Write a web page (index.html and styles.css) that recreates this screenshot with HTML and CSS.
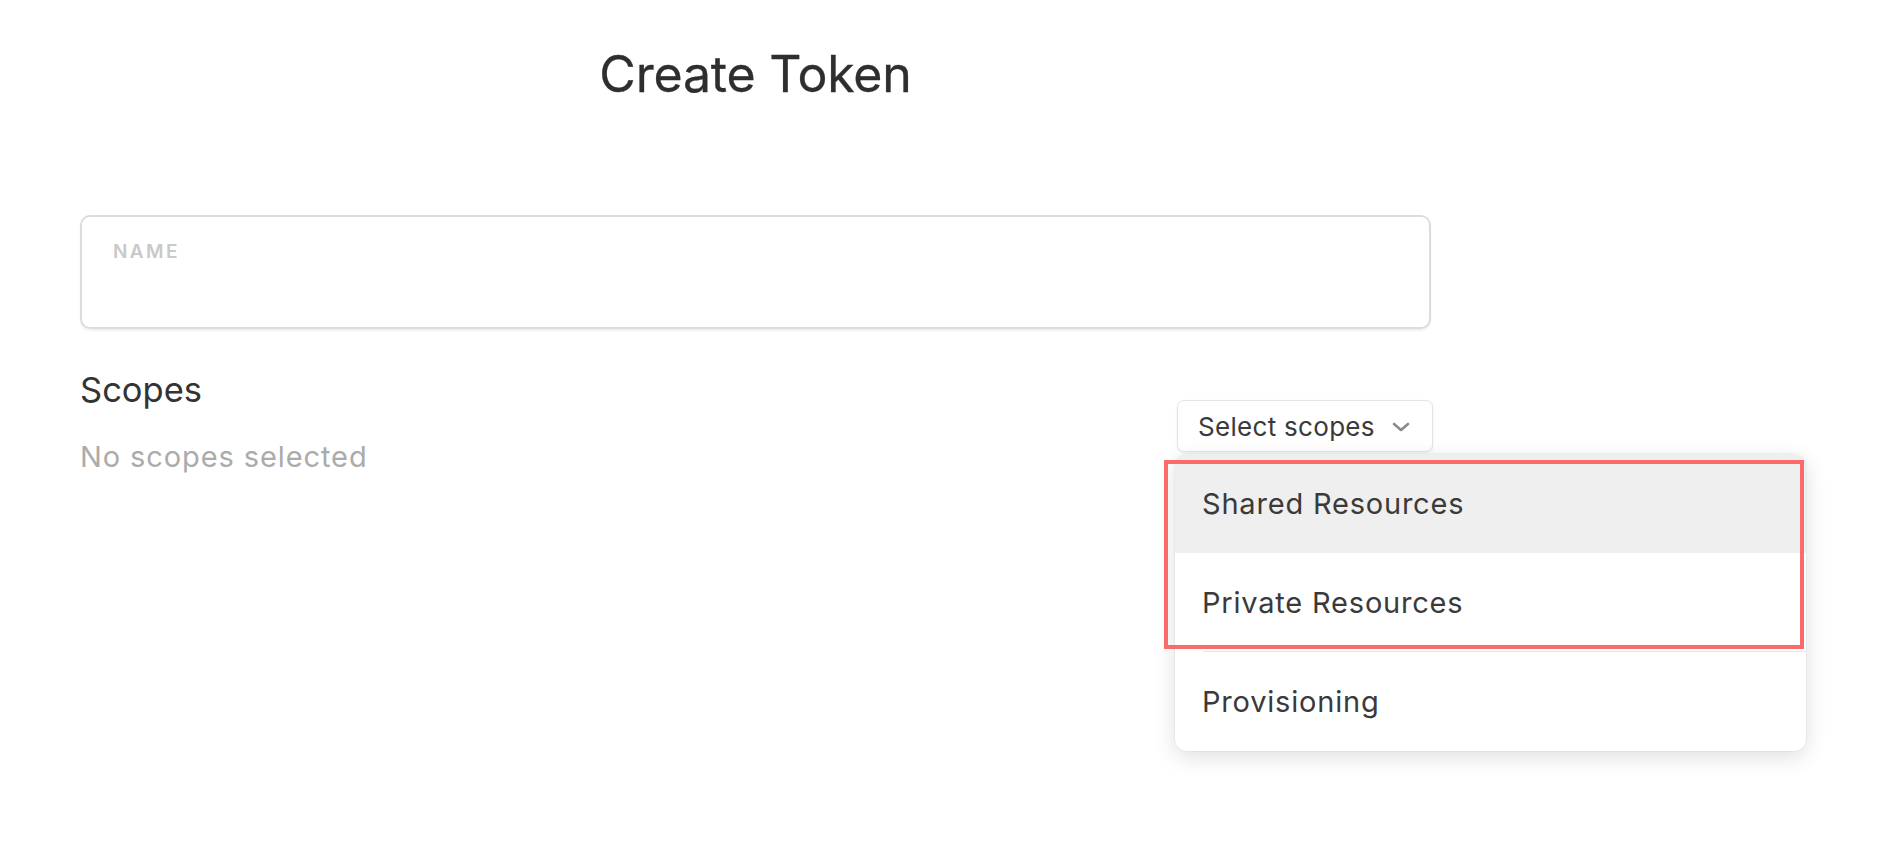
FILE: index.html
```html
<!DOCTYPE html>
<html lang="en">
<head>
<meta charset="utf-8">
<title>Create Token</title>
<link rel="stylesheet" href="styles.css">
</head>
<body>
<main class="page">
  <h1 class="title">Create Token</h1>
  <div class="field">
    <label class="field-label">NAME</label>
  </div>
  <section class="scopes">
    <div class="scopes-info">
      <h2 class="scopes-title">Scopes</h2>
      <p class="scopes-empty">No scopes selected</p>
    </div>
    <div class="scopes-picker">
      <button class="select-btn" type="button">
        <span>Select scopes</span>
        <svg class="chevron" width="18" height="10" viewBox="0 0 18 10"><path d="M2 2 L9 8 L16 2" fill="none" stroke="#8a8a8a" stroke-width="2.6" stroke-linecap="round" stroke-linejoin="round"/></svg>
      </button>
      <div class="menu">
        <div class="menu-item is-active">Shared Resources</div>
        <div class="menu-item">Private Resources</div>
        <div class="menu-item with-sep">Provisioning</div>
        <div class="annotation"></div>
      </div>
    </div>
  </section>
</main>
</body>
</html>
```
FILE: styles.css
```css
html, body {
  margin: 0;
  padding: 0;
  background: #ffffff;
}

body {
  font-family: Inter, "Noto Sans", "Liberation Sans", sans-serif;
  color: #333333;
  width: 1880px;
  height: 866px;
  overflow: hidden;
}

.page {
  width: 1351px;
  padding: 49px 0 0 80px;
}

.title {
  margin: 0;
  font-size: 50px;
  line-height: 50px;
  font-weight: 400;
  text-align: center;
  color: #2e2e2e;
  letter-spacing: -0.2px;
  -webkit-text-stroke: 0.3px #2e2e2e;
}

.field {
  margin-top: 116px;
  border: 2px solid #dcdcdc;
  border-radius: 10px;
  box-shadow: 0 2px 2px rgba(0, 0, 0, 0.06);
  padding: 25px 0 0 31px;
  box-sizing: border-box;
  height: 114px;
}

.field-label {
  display: block;
  font-size: 19px;
  line-height: 20px;
  font-weight: 600;
  letter-spacing: 2.4px;
  color: #c9c9c9;
}

.scopes {
  margin-top: 41px;
  display: flex;
  justify-content: space-between;
  align-items: flex-start;
}

.scopes-title {
  margin: 0;
  font-size: 34.5px;
  line-height: 40px;
  font-weight: 400;
  color: #333333;
}

.scopes-empty {
  margin: 29px 0 0;
  font-size: 29px;
  line-height: 36px;
  letter-spacing: 0.9px;
  color: #ababab;
}

.scopes-picker {
  position: relative;
  margin-top: 30px;
  margin-right: -2px;
}

.select-btn {
  display: flex;
  align-items: center;
  gap: 17px;
  height: 52px;
  padding: 0 22px 0 20px;
  border: 1px solid #e4e4e4;
  border-radius: 7px;
  background: #ffffff;
  box-shadow: 0 1px 3px rgba(0, 0, 0, 0.07);
  font-family: inherit;
  font-size: 26px;
  letter-spacing: 0.3px;
  color: #3a3a3a;
  box-sizing: border-box;
  width: 256px;
}

.chevron {
  display: block;
  margin-top: 2px;
}

.menu {
  position: absolute;
  top: 54px;
  left: -2px;
  width: 631px;
  background: #ffffff;
  border-radius: 12px;
  box-shadow: 0 6px 22px rgba(0, 0, 0, 0.13), 0 0 0 1px rgba(0, 0, 0, 0.03);
}

.menu-item {
  position: relative;
  height: 99px;
  padding-left: 27px;
  display: flex;
  align-items: center;
  font-size: 29px;
  letter-spacing: 0.8px;
  color: #3a3a3a;
}

.menu-item.is-active {
  background: #efefef;
  border-radius: 12px 12px 0 0;
}

.menu-item.with-sep::before {
  content: "";
  position: absolute;
  top: -1px;
  left: 28px;
  right: 0;
  height: 1px;
  background: #e6e6e6;
}

.annotation {
  position: absolute;
  left: -11px;
  top: 6px;
  width: 640px;
  height: 189px;
  border: 4px solid #fb6b6b;
  box-sizing: border-box;
  pointer-events: none;
}
```
